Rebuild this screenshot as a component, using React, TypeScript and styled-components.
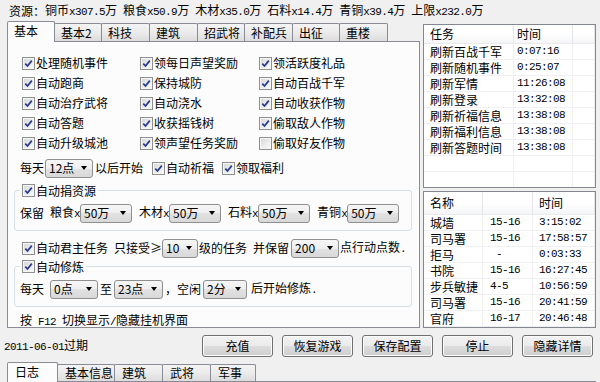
import React from 'react';
import styled, { createGlobalStyle } from 'styled-components';

// Data
//----------------------------------------------
const resources: Array<[string, string]> = [
  ['铜币', '307.5'],
  ['粮食', '50.9'],
  ['木材', '35.0'],
  ['石料', '14.4'],
  ['青铜', '39.4'],
  ['上限', '232.0'],
];

const mainTabs: Array<[string, number]> = [
  ['基本', 48],
  ['基本2', 48],
  ['科技', 49],
  ['建筑', 49],
  ['招武将', 48],
  ['补配兵', 49],
  ['出征', 48],
  ['重楼', 49],
];

const options: Array<[string, boolean]> = [
  ['处理随机事件', true],
  ['领每日声望奖励', true],
  ['领活跃度礼品', true],
  ['自动跑商', true],
  ['保持城防', true],
  ['自动百战千军', true],
  ['自动治疗武将', true],
  ['自动浇水', true],
  ['自动收获作物', true],
  ['自动答题', true],
  ['收获摇钱树', true],
  ['偷取敌人作物', true],
  ['自动升级城池', true],
  ['领声望任务奖励', true],
  ['偷取好友作物', false],
];

const tasks = [
  ['刷新百战千军', '0:07:16'],
  ['刷新随机事件', '0:25:07'],
  ['刷新军情', '11:26:08'],
  ['刷新登录', '13:32:08'],
  ['刷新祈福信息', '13:38:08'],
  ['刷新福利信息', '13:38:08'],
  ['刷新答题时间', '13:38:08'],
];

const buildings = [
  ['城墙', '15-16', '3:15:02'],
  ['司马署', '15-16', '17:58:57'],
  ['拒马', ' -', '0:03:33'],
  ['书院', '15-16', '16:27:45'],
  ['步兵敏捷', '4-5', '10:56:59'],
  ['司马署', '15-16', '20:41:59'],
  ['官府', '16-17', '20:46:48'],
];

const actions = ['充值', '恢复游戏', '保存配置', '停止', '隐藏详情'];

const bottomTabs: Array<[string, number]> = [
  ['日志', 51],
  ['基本信息', 58],
  ['建筑', 49],
  ['武将', 49],
  ['军事', 46],
];

type Col = { title: string; width: string; pad: number };

const taskCols: Col[] = [
  { title: '任务', width: '90px', pad: 6 },
  { title: '时间', width: '59px', pad: 3 },
  { title: '', width: '1fr', pad: 0 },
];

const buildingCols: Col[] = [
  { title: '名称', width: '59px', pad: 6 },
  { title: '', width: '50px', pad: 7 },
  { title: '时间', width: '1fr', pad: 6 },
];

const isAscii = (s: string) => /^[\x20-\x7e]+$/.test(s);

// Small parts
//----------------------------------------------
const CheckBox: React.FC<{ checked: boolean }> = ({ checked }) => (
  <Box>
    {checked && (
      <svg width="9" height="9" viewBox="0 0 9 9">
        <path
          d="M1.3 4.6 L3.5 7 L7.8 1.6"
          fill="none"
          stroke="#25398f"
          strokeWidth="1.7"
        />
      </svg>
    )}
  </Box>
);

const Check: React.FC<{ label: string; checked?: boolean; ml?: number }> = ({
  label,
  checked = true,
  ml = 0,
}) => (
  <CheckItem $ml={ml}>
    <CheckBox checked={checked} />
    <span>{label}</span>
  </CheckItem>
);

const Combo: React.FC<{ value: string; w: number; ml?: number }> = ({
  value,
  w,
  ml = 0,
}) => (
  <ComboBox $w={w} $ml={ml}>
    <span>{value}</span>
    <Arrow />
  </ComboBox>
);

const ListView: React.FC<{
  cols: Col[];
  rows: string[][];
  height: number;
  headerHeight: number;
  minRows: number;
}> = ({ cols, rows, height, headerHeight, minRows }) => {
  const template = cols.map((c) => c.width).join(' ');
  const filled = [...rows];
  while (filled.length < minRows) filled.push(cols.map(() => ''));
  return (
    <ListBox $h={height}>
      <ListHeader $cols={template} $h={headerHeight}>
        {cols.map((c, i) => (
          <HeaderCell key={i} $pad={c.pad}>
            {c.title}
          </HeaderCell>
        ))}
      </ListHeader>
      {filled.map((row, r) => (
        <ListRow key={r} $cols={template}>
          {cols.map((c, i) => {
            const text = row[i] ?? '';
            return (
              <Cell key={i} $pad={c.pad}>
                {text && isAscii(text) ? <Asc>{text}</Asc> : text}
              </Cell>
            );
          })}
        </ListRow>
      ))}
    </ListBox>
  );
};

// App
//----------------------------------------------
const App: React.FC = () => {
  return (
    <Window>
      <GlobalStyle />
      <ResourceBar>
        资源：
        {resources.map(([name, value]) => (
          <Res key={name}>
            {name}
            <Asc>x{value}</Asc>万
          </Res>
        ))}
      </ResourceBar>

      <Middle>
        <TabWidget>
          <TabStrip $h={20}>
            {mainTabs.map(([name, w], i) => (
              <Tab key={name} $w={w} $active={i === 0} $tall={21} $short={18} $pad={6}>
                {name}
              </Tab>
            ))}
          </TabStrip>
          <TabPanel>
            <OptionGrid>
              {options.map(([label, checked]) => (
                <Check key={label} label={label} checked={checked} />
              ))}
            </OptionGrid>

            <FormRow $mt={5} $pl={12}>
              <Text>每天</Text>
              <Combo value="12点" w={48} ml={1} />
              <Text $ml={2}>以后开始</Text>
              <Check label="自动祈福" ml={9} />
              <Check label="领取福利" ml={8} />
            </FormRow>

            <Group $mt={5}>
              <GroupTitle>
                <CheckBox checked />
                <span>自动捐资源</span>
              </GroupTitle>
              <FormRow $mt={0} $pl={0}>
                <Text>保留</Text>
                <Text $ml={6}>
                  粮食<Asc>x</Asc>
                </Text>
                <Combo value="50万" w={52} />
                <Text $ml={7}>
                  木材<Asc>x</Asc>
                </Text>
                <Combo value="50万" w={52} />
                <Text $ml={7}>
                  石料<Asc>x</Asc>
                </Text>
                <Combo value="50万" w={52} />
                <Text $ml={7}>
                  青铜<Asc>x</Asc>
                </Text>
                <Combo value="50万" w={52} />
              </FormRow>
            </Group>

            <FormRow $mt={7} $pl={14}>
              <Check label="自动君主任务" />
              <Text $ml={6}>只接受≥</Text>
              <Combo value="10" w={36} />
              <Text $ml={1}>级的任务</Text>
              <Text $ml={6}>并保留</Text>
              <Combo value="200" w={48} ml={2} />
              <Text $ml={1}>
                点行动点数<Asc>.</Asc>
              </Text>
            </FormRow>

            <Group $mt={1}>
              <GroupTitle>
                <CheckBox checked />
                <span>自动修炼</span>
              </GroupTitle>
              <FormRow $mt={0} $pl={0}>
                <Text>每天</Text>
                <Combo value="0点" w={48} ml={6} />
                <Text $ml={2}>至</Text>
                <Combo value="23点" w={49} ml={2} />
                <Text $ml={2}>，空闲</Text>
                <Combo value="2分" w={44} ml={2} />
                <Text $ml={4}>
                  后开始修炼<Asc>.</Asc>
                </Text>
              </FormRow>
            </Group>

            <Hint>
              按<Asc> F12 </Asc>切换显示<Asc>/</Asc>隐藏挂机界面
            </Hint>
          </TabPanel>
        </TabWidget>

        <SideColumn>
          <ListView cols={taskCols} rows={tasks} height={164} headerHeight={19} minRows={9} />
          <ListView cols={buildingCols} rows={buildings} height={137} headerHeight={23} minRows={7} />
        </SideColumn>
      </Middle>

      <ActionRow>
        <Expire>
          <Asc>2011-06-01</Asc>过期
        </Expire>
        {actions.map((a) => (
          <Button key={a}>{a}</Button>
        ))}
      </ActionRow>

      <BottomStrip>
        {bottomTabs.map(([name, w], i) => (
          <Tab key={name} $w={w} $active={i === 0} $tall={20} $short={17} $pad={7}>
            {name}
          </Tab>
        ))}
      </BottomStrip>
      <BottomPanel />
    </Window>
  );
};

// Styles
//----------------------------------------------
const GlobalStyle = createGlobalStyle`
  html, body {
    margin: 0;
    padding: 0;
    background: #f0f0f0;
  }
  body {
    font-family: "Noto Sans CJK SC", "Noto Sans", sans-serif;
    font-size: 12px;
    line-height: 1;
    color: #000;
  }
`;

const Window = styled.div`
  width: 600px;
  height: 382px;
  overflow: hidden;
  display: flex;
  flex-direction: column;
  background: #f0f0f0;
`;

const Asc = styled.span`
  font-family: "Liberation Mono", monospace;
  font-size: 11px;
  letter-spacing: -0.6px;
  white-space: pre;
`;

const ResourceBar = styled.div`
  height: 21px;
  flex: none;
  display: flex;
  align-items: center;
  padding-left: 9px;
  white-space: nowrap;
`;

const Res = styled.span`
  margin-right: 6px;
`;

const Middle = styled.div`
  height: 308px;
  flex: none;
  display: flex;
`;

const TabWidget = styled.div`
  width: 413px;
  margin-left: 7px;
  display: flex;
  flex-direction: column;
`;

const TabStrip = styled.div<{ $h: number }>`
  height: ${(p) => p.$h}px;
  flex: none;
  display: flex;
  align-items: flex-end;
`;

const Tab = styled.div<{
  $w: number;
  $active: boolean;
  $tall: number;
  $short: number;
  $pad: number;
}>`
  box-sizing: border-box;
  width: ${(p) => p.$w}px;
  height: ${(p) => (p.$active ? p.$tall : p.$short)}px;
  margin-right: -1px;
  margin-bottom: ${(p) => (p.$active ? -1 : 0)}px;
  padding: 0 0 ${(p) => (p.$active ? 2 : 0)}px ${(p) => p.$pad}px;
  display: flex;
  align-items: center;
  border: 1px solid #898c95;
  border-bottom: none;
  border-radius: 2px 2px 0 0;
  background: ${(p) =>
    p.$active ? '#fcfcfc' : 'linear-gradient(#f4f4f4 0%, #ebebeb 50%, #dcdcdc 100%)'};
  position: relative;
  z-index: ${(p) => (p.$active ? 2 : 1)};
  white-space: nowrap;
`;

const TabPanel = styled.div`
  box-sizing: border-box;
  height: 287px;
  border: 1px solid #898c95;
  background: #fcfcfc;
  display: flex;
  flex-direction: column;
`;

const OptionGrid = styled.div`
  display: grid;
  grid-template-columns: 118px 119px 1fr;
  grid-auto-rows: 20px;
  margin: 11px 0 0 14px;
`;

const CheckItem = styled.span<{ $ml: number }>`
  display: flex;
  align-items: center;
  gap: 1px;
  margin-left: ${(p) => p.$ml}px;
  white-space: nowrap;
`;

const Box = styled.span`
  box-sizing: border-box;
  width: 13px;
  height: 13px;
  flex: none;
  display: flex;
  align-items: center;
  justify-content: center;
  border: 1px solid #8e8f8f;
  background: linear-gradient(135deg, #d2d5da 0%, #eeeeee 60%, #fbfbfb 100%);
  box-shadow: inset 0 0 0 1px #f6f6f6;

  svg {
    display: block;
  }
`;

const FormRow = styled.div<{ $mt: number; $pl: number }>`
  height: 20px;
  flex: none;
  display: flex;
  align-items: center;
  margin-top: ${(p) => p.$mt}px;
  padding-left: ${(p) => p.$pl}px;
  white-space: nowrap;
`;

const Text = styled.span<{ $ml?: number }>`
  margin-left: ${(p) => p.$ml ?? 0}px;
`;

const ComboBox = styled.div<{ $w: number; $ml: number }>`
  box-sizing: border-box;
  width: ${(p) => p.$w}px;
  height: 19px;
  margin-left: ${(p) => p.$ml}px;
  padding: 0 5px 0 3px;
  display: flex;
  align-items: center;
  justify-content: space-between;
  border: 1px solid #8e8f8f;
  border-radius: 3px;
  background: linear-gradient(#f6f6f6 0%, #eeeeee 50%, #e2e2e2 50%, #d8d8d8 100%);
`;

const Arrow = styled.span`
  width: 0;
  height: 0;
  border-left: 3.5px solid transparent;
  border-right: 3.5px solid transparent;
  border-top: 4px solid #000;
`;

const Group = styled.fieldset<{ $mt: number }>`
  margin: ${(p) => p.$mt}px 7px 0 6px;
  padding: 5px 5px 7px 5px;
  border: 1px solid #d5dfe5;
  border-radius: 3px;
  min-inline-size: 0;
`;

const GroupTitle = styled.legend`
  height: 15px;
  padding: 0 2px;
  display: flex;
  align-items: center;
  gap: 1px;
`;

const Hint = styled.div`
  margin: 7px 0 0 12px;
  white-space: nowrap;
`;

const SideColumn = styled.div`
  width: 173px;
  margin: 3px 0 0 3px;
  display: flex;
  flex-direction: column;
  gap: 3px;
`;

const ListBox = styled.div<{ $h: number }>`
  box-sizing: border-box;
  height: ${(p) => p.$h}px;
  flex: none;
  border: 1px solid #828790;
  background: #fff;
  overflow: hidden;
`;

const ListHeader = styled.div<{ $cols: string; $h: number }>`
  box-sizing: border-box;
  height: ${(p) => p.$h}px;
  display: grid;
  grid-template-columns: ${(p) => p.$cols};
  background: linear-gradient(#ffffff 0%, #ffffff 50%, #f4f5f7 100%);
  border-bottom: 1px solid #eaeaea;
`;

const HeaderCell = styled.div<{ $pad: number }>`
  display: flex;
  align-items: center;
  padding-left: ${(p) => p.$pad}px;
  border-right: 1px solid #e3e5e8;
`;

const ListRow = styled.div<{ $cols: string }>`
  box-sizing: border-box;
  height: 16px;
  display: grid;
  grid-template-columns: ${(p) => p.$cols};
  border-bottom: 1px solid #f0f0f0;
`;

const Cell = styled.div<{ $pad: number }>`
  display: flex;
  align-items: center;
  padding-left: ${(p) => p.$pad}px;
  border-right: 1px solid #f0f0f0;
  white-space: nowrap;
  overflow: hidden;
`;

const ActionRow = styled.div`
  height: 33px;
  flex: none;
  display: flex;
  align-items: center;
  padding: 0 7px 0 4px;
`;

const Expire = styled.span`
  flex: 1;
  white-space: nowrap;
`;

const Button = styled.div`
  box-sizing: border-box;
  width: 71px;
  height: 22px;
  margin-left: 9px;
  display: flex;
  align-items: center;
  justify-content: center;
  border: 1px solid #707070;
  border-radius: 3px;
  background: linear-gradient(#f2f2f2 0%, #ebebeb 50%, #dddddd 50%, #cfcfcf 100%);
  box-shadow: inset 0 0 0 1px #fcfcfc;
`;

const BottomStrip = styled.div`
  height: 19px;
  flex: none;
  margin-left: 7px;
  display: flex;
  align-items: flex-end;
`;

const BottomPanel = styled.div`
  height: 10px;
  flex: none;
  margin: 0 4px 0 7px;
  border-top: 1px solid #898c95;
  background: #fcfcfc;
`;

export default App;
